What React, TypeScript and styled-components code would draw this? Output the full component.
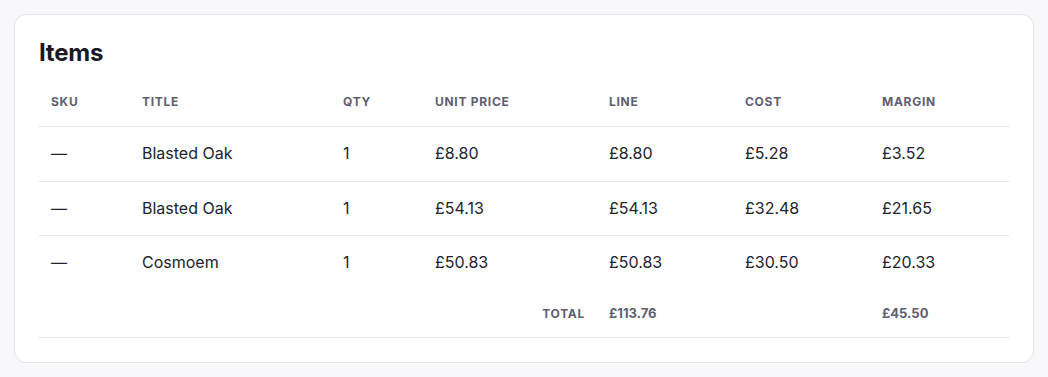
import React from "react";
import styled, { createGlobalStyle } from "styled-components";

const GlobalStyle = createGlobalStyle`
  body {
    margin: 0;
    background: #f8f8fb;
    font-family: Inter, "Noto Sans", sans-serif;
    color: #1f2030;
  }
`;

const Page = styled.div`
  padding: 14px;
`;

const Card = styled.section`
  background: #ffffff;
  border: 1px solid #e4e4eb;
  border-radius: 12px;
  padding: 24px;
`;

const Title = styled.h2`
  margin: 0 0 16px;
  font-size: 24px;
  line-height: 27px;
  font-weight: 700;
  color: #181924;
  letter-spacing: -0.01em;
`;

const Table = styled.table`
  width: 100%;
  border-collapse: collapse;
  table-layout: fixed;
`;

const HeadCell = styled.th<{ $right?: boolean }>`
  padding: 12px 12px 16px;
  font-size: 12px;
  line-height: 16px;
  font-weight: 700;
  letter-spacing: 0.06em;
  text-transform: uppercase;
  color: #5d6072;
  text-align: ${p => (p.$right ? "right" : "left")};
  border-bottom: 1px solid #e6e6ed;
`;

const Row = styled.tr<{ $last?: boolean }>`
  border-bottom: ${p => (p.$last ? "none" : "1px solid #e6e6ed")};
`;

const Cell = styled.td`
  padding: 16px 12px;
  font-size: 16px;
  line-height: 21.5px;
  color: #22232f;
  white-space: nowrap;
`;

const TotalRow = styled.tr`
  border-bottom: 1px solid #e6e6ed;
`;

const TotalCell = styled.td<{ $right?: boolean }>`
  padding: 14px 12px 14.5px;
  font-size: 13px;
  line-height: 18px;
  font-weight: 700;
  color: #5d6072;
  text-align: ${p => (p.$right ? "right" : "left")};
`;

const TotalLabel = styled.span`
  font-size: 12px;
  letter-spacing: 0.06em;
  text-transform: uppercase;
`;

interface Item {
  sku: string;
  title: string;
  qty: number;
  unit: string;
  line: string;
  cost: string;
  margin: string;
}

const items: Item[] = [
  { sku: "—", title: "Blasted Oak", qty: 1, unit: "£8.80", line: "£8.80", cost: "£5.28", margin: "£3.52" },
  { sku: "—", title: "Blasted Oak", qty: 1, unit: "£54.13", line: "£54.13", cost: "£32.48", margin: "£21.65" },
  { sku: "—", title: "Cosmoem", qty: 1, unit: "£50.83", line: "£50.83", cost: "£30.50", margin: "£20.33" },
];

const columns = [
  { label: "SKU", width: 91 },
  { label: "Title", width: 201 },
  { label: "Qty", width: 92 },
  { label: "Unit price", width: 174 },
  { label: "Line", width: 136 },
  { label: "Cost", width: 137 },
  { label: "Margin", width: 139 },
];

export default function App() {
  return (
    <>
      <GlobalStyle />
      <Page>
        <Card>
          <Title>Items</Title>
          <Table>
            <colgroup>
              {columns.map(c => (
                <col key={c.label} style={{ width: c.width }} />
              ))}
            </colgroup>
            <thead>
              <tr>
                {columns.map(c => (
                  <HeadCell key={c.label}>{c.label}</HeadCell>
                ))}
              </tr>
            </thead>
            <tbody>
              {items.map((item, i) => (
                <Row key={i} $last={i === items.length - 1}>
                  <Cell>{item.sku}</Cell>
                  <Cell>{item.title}</Cell>
                  <Cell>{item.qty}</Cell>
                  <Cell>{item.unit}</Cell>
                  <Cell>{item.line}</Cell>
                  <Cell>{item.cost}</Cell>
                  <Cell>{item.margin}</Cell>
                </Row>
              ))}
            </tbody>
            <tfoot>
              <TotalRow>
                <TotalCell colSpan={4} $right>
                  <TotalLabel>Total</TotalLabel>
                </TotalCell>
                <TotalCell>£113.76</TotalCell>
                <TotalCell />
                <TotalCell>£45.50</TotalCell>
              </TotalRow>
            </tfoot>
          </Table>
        </Card>
      </Page>
    </>
  );
}
